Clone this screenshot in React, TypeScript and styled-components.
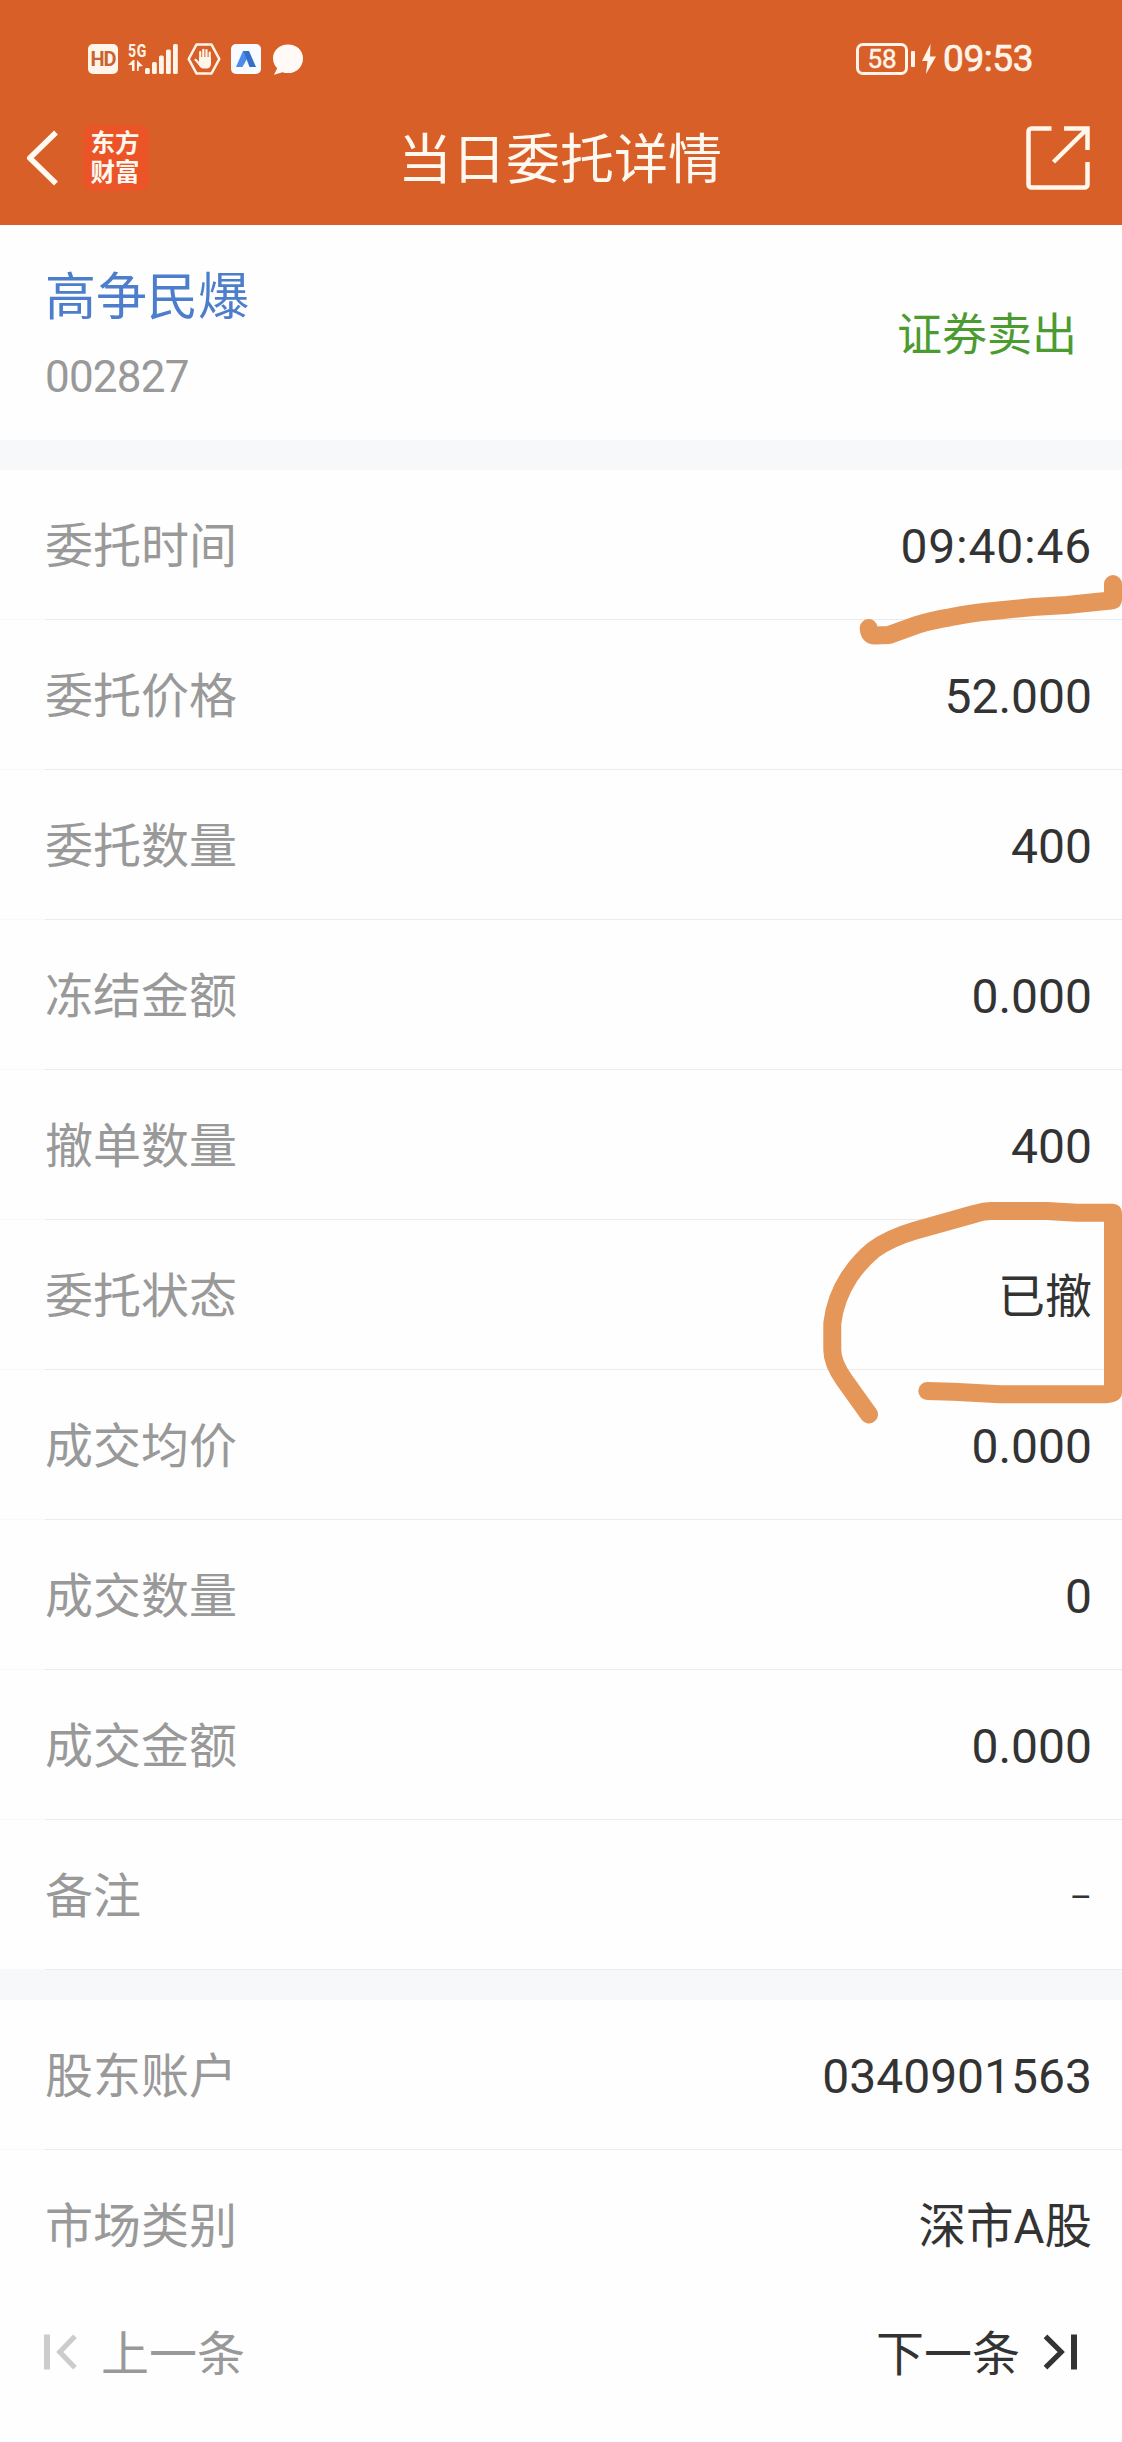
import React from "react";
import styled, { createGlobalStyle } from "styled-components";

const GlobalStyle = createGlobalStyle`
  * { box-sizing: border-box; }
  body {
    margin: 0;
    background: #fefefe;
    font-family: Roboto, "Noto Sans CJK SC", sans-serif;
  }
`;

const ORANGE = "#d85f27";
const CREAM = "#fff4ea";

const Screen = styled.main`
  position: relative;
  width: 1122px;
  height: 2442px;
  overflow: hidden;
  background: #fefefe;
`;

const Top = styled.header`
  height: 225px;
  background: ${ORANGE};
  color: #fff8f0;
`;

const StatusBar = styled.div`
  display: flex;
  justify-content: space-between;
  height: 117px;
  padding: 42px 90px 0 88px;
`;

const StatusGroup = styled.div`
  display: flex;
  align-items: center;
  height: 34px;
  color: ${CREAM};
`;

const HdBadge = styled.span`
  display: flex;
  align-items: center;
  justify-content: center;
  width: 30px;
  height: 30px;
  margin-right: 10px;
  border-radius: 5px;
  background: ${CREAM};
  color: #c8632f;
  font-size: 20px;
  font-weight: 700;
  letter-spacing: -1px;
`;

const Network = styled.div`
  display: flex;
  align-items: flex-end;
  margin-right: 9px;
`;

const NetworkType = styled.div`
  width: 17px;
  height: 32px;
  font-size: 19px;
  line-height: 16px;
  font-weight: 700;
  letter-spacing: 1px;
  white-space: nowrap;

  span {
    display: block;
    transform: scaleX(0.74);
    transform-origin: left;
  }
  svg { display: block; }
`;

const Bars = styled.svg`
  display: block;
`;

const AppBadge = styled.span`
  display: flex;
  align-items: center;
  justify-content: center;
  width: 30px;
  height: 30px;
  margin: 0 11px 0 10px;
  border-radius: 5px;
  background: #f8fbff;
`;

const Battery = styled.span`
  display: flex;
  align-items: center;
  justify-content: center;
  width: 52px;
  height: 32px;
  border: 3px solid ${CREAM};
  border-radius: 7px;
  font-size: 26px;
  line-height: 26px;
  -webkit-text-stroke: 0.5px ${CREAM};
`;

const BatteryNub = styled.span`
  width: 4px;
  height: 16px;
  margin: 0 7px 0 3px;
  border-radius: 1px;
  background: ${CREAM};
`;

const Clock = styled.time`
  width: 89px;
  margin-left: 7px;
  font-size: 37px;
  line-height: 34px;
  letter-spacing: -0.4px;
  -webkit-text-stroke: 0.7px ${CREAM};
  white-space: nowrap;
`;

const TitleBar = styled.div`
  display: grid;
  grid-template-columns: 1fr auto 1fr;
  align-items: center;
  height: 82px;
  padding: 0 32px 0 26px;
`;

const TitleLeft = styled.div`
  display: flex;
  align-items: center;
  gap: 24px;
`;

const BrandLogo = styled.div`
  display: flex;
  flex-direction: column;
  align-items: center;
  width: 66px;
  height: 66px;
  padding: 5px 2px 0 0;
  border-radius: 10px;
  background: #ea5427;
  font-size: 24.5px;
  line-height: 28.5px;
  font-weight: 700;
`;

const Title = styled.h1`
  margin: 0;
  padding: 6px 0 0 4px;
  font-size: 54px;
  line-height: 76px;
  font-weight: 400;
`;

const TitleRight = styled.div`
  display: flex;
  justify-content: flex-end;
`;

const Summary = styled.section`
  display: flex;
  align-items: center;
  justify-content: space-between;
  height: 215px;
  padding: 0 45px;
`;

const Stock = styled.div`
  padding-top: 9px;
`;

const StockName = styled.div`
  color: #4d7ecb;
  font-size: 51px;
  line-height: 80px;
`;

const StockCode = styled.div`
  color: #999;
  font-size: 44px;
  line-height: 79px;
  letter-spacing: -0.8px;
`;

const Side = styled.div`
  padding-bottom: 3px;
  color: #4b9b31;
  font-size: 45px;
`;

const Band = styled.div`
  height: 30px;
  background: #f7f8fa;
`;

const Row = styled.div<{ $last?: boolean }>`
  display: flex;
  align-items: center;
  justify-content: space-between;
  height: 150px;
  padding: 4px 30px 0 45px;
  background: ${(p) =>
    p.$last
      ? "none"
      : "linear-gradient(to right, #f8f8f8 45px, #ebebeb 45px) bottom / 100% 1px no-repeat"};
  font-size: 48px;
  line-height: 72px;
`;

const Label = styled.span`
  color: #999;
`;

const Value = styled.span<{ $tracking?: number; $size?: number }>`
  color: #333;
  font-size: ${(p) => p.$size ?? 48}px;
  letter-spacing: ${(p) => p.$tracking ?? 0}px;
`;

const Pager = styled.nav`
  display: flex;
  align-items: center;
  justify-content: space-between;
  height: 104px;
  padding: 0 45px 0 44px;
`;

const PagerButton = styled.button<{ $disabled?: boolean }>`
  display: flex;
  align-items: center;
  gap: 23px;
  padding: 0;
  border: 0;
  background: none;
  color: ${(p) => (p.$disabled ? "#999" : "#333")};
  font: inherit;
  font-size: 48px;
  line-height: 72px;
`;

const PagerText = styled.span`
  padding-top: 5px;
`;

const Markup = styled.svg`
  position: absolute;
  left: 0;
  top: 0;
  pointer-events: none;
`;

type Entry = { label: string; value: string; tracking?: number; size?: number };

const orderRows: Entry[] = [
  { label: "委托时间", value: "09:40:46", tracking: 0.8 },
  { label: "委托价格", value: "52.000" },
  { label: "委托数量", value: "400" },
  { label: "冻结金额", value: "0.000" },
  { label: "撤单数量", value: "400" },
  { label: "委托状态", value: "已撤", size: 47 },
  { label: "成交均价", value: "0.000" },
  { label: "成交数量", value: "0" },
  { label: "成交金额", value: "0.000" },
  { label: "备注", value: "–", size: 34 },
];

const accountRows: Entry[] = [
  { label: "股东账户", value: "0340901563" },
  { label: "市场类别", value: "深市A股", size: 47.5 },
];

const NetworkArrows = () => (
  <svg width="16" height="14" viewBox="0 0 16 14" fill={CREAM}>
    <path d="M0 6 5 1h1.500v11H4V6zM9 1l6 6-4 .5L10.500 12H9z" />
  </svg>
);

const SignalBars = () => (
  <Bars width="33" height="32" viewBox="0 0 33 32" fill={CREAM}>
    <rect x="0" y="25" width="4.800" height="6" rx="1.500" />
    <rect x="7" y="19" width="4.800" height="12" rx="1.500" />
    <rect x="14" y="12.500" width="4.800" height="18.500" rx="1.500" />
    <rect x="21" y="6.500" width="4.800" height="24.500" rx="1.500" />
    <rect x="28" y="1" width="4.800" height="30" rx="1.500" />
  </Bars>
);

const HandIcon = () => (
  <svg width="34" height="34" viewBox="0 0 34 34" fill="none" stroke={CREAM}>
    <path d="M9.500 2.500h15L32.300 17l-7.800 14.500h-15L1.700 17z" strokeWidth="2.600" strokeLinejoin="round" />
    <path d="M13.200 17V10M16.300 16V7.800M19.500 16V8M22.700 17v-6.500M8.500 17.800l4 4.200" strokeWidth="2.200" strokeLinecap="round" />
    <path d="M12 15h12v6.500c0 3-2 5-4.500 5h-3c-2 0-3.200-1-4.300-2.700L10 20l2 .5z" fill={CREAM} stroke="none" />
  </svg>
);

const BlueMark = () => (
  <svg width="20" height="17" viewBox="0 0 20 17">
    <path d="M7 0h6l-1.500 7L6.500 16H0z" fill="#4d8ce8" />
    <path d="M7.500 0H13l7 16h-6.500z" fill="#3470c8" />
  </svg>
);

const BubbleIcon = () => (
  <svg width="32" height="33" viewBox="0 0 32 33" fill="#fffaf6">
    <path d="M16 1.500C7.500 1.500 1 7.500 1 15.300c0 4.200 1.800 7.700 4.200 10L2 31.800l8.500-2.500c1.700.6 3.500.8 5.500.8 8.500 0 15-6.500 15-14.700S24.500 1.500 16 1.500z" />
  </svg>
);

const BoltIcon = () => (
  <svg width="14" height="30" viewBox="0 0 14 30" fill={CREAM}>
    <path d="M8.500 0 0 17h5.500L4 30 14 12.500H8z" />
  </svg>
);

const BackIcon = () => (
  <svg width="33" height="56" viewBox="0 0 33 56" fill="none" stroke="#fffaf2" strokeWidth="5.500">
    <path d="M30 2.500 3.800 28 30 53.500" strokeLinejoin="round" />
  </svg>
);

const ShareIcon = () => (
  <svg width="64" height="64" viewBox="0 0 64 64" fill="none" stroke="#fff7ec" strokeWidth="4.500">
    <path d="M25.500 2.500H5.500a3 3 0 0 0-3 3v53a3 3 0 0 0 3 3h53a3 3 0 0 0 3-3V36M38 2.500h23.500V24M60.500 3.500 27.500 36" />
  </svg>
);

const FirstIcon = () => (
  <svg width="34" height="36" viewBox="0 0 34 36" fill="none" stroke="#ccc" strokeWidth="6">
    <path d="M3 .5v35" />
    <path d="M31 2.300 15.800 18 31 33.700" strokeWidth="5.200" />
  </svg>
);

const LastIcon = () => (
  <svg width="34" height="36" viewBox="0 0 34 36" fill="none" stroke="#333" strokeWidth="6">
    <path d="M31 .5v35" />
    <path d="M2.500 2.300 18.200 18 2.500 33.700" strokeWidth="5.200" />
  </svg>
);

const Rows = ({ rows, open }: { rows: Entry[]; open?: boolean }) => (
  <section>
    {rows.map((row, i) => (
      <Row key={row.label} $last={open && i === rows.length - 1}>
        <Label>{row.label}</Label>
        <Value $tracking={row.tracking} $size={row.size}>
          {row.value}
        </Value>
      </Row>
    ))}
  </section>
);

export default function App() {
  return (
    <Screen>
      <GlobalStyle />
      <Top>
        <StatusBar>
          <StatusGroup>
            <HdBadge>HD</HdBadge>
            <Network>
              <NetworkType>
                <span>5G</span>
                <NetworkArrows />
              </NetworkType>
              <SignalBars />
            </Network>
            <HandIcon />
            <AppBadge>
              <BlueMark />
            </AppBadge>
            <BubbleIcon />
          </StatusGroup>
          <StatusGroup>
            <Battery>58</Battery>
            <BatteryNub />
            <BoltIcon />
            <Clock>09:53</Clock>
          </StatusGroup>
        </StatusBar>
        <TitleBar>
          <TitleLeft>
            <BackIcon />
            <BrandLogo>
              <span>东方</span>
              <span>财富</span>
            </BrandLogo>
          </TitleLeft>
          <Title>当日委托详情</Title>
          <TitleRight>
            <ShareIcon />
          </TitleRight>
        </TitleBar>
      </Top>
      <Summary>
        <Stock>
          <StockName>高争民爆</StockName>
          <StockCode>002827</StockCode>
        </Stock>
        <Side>证券卖出</Side>
      </Summary>
      <Band />
      <Rows rows={orderRows} />
      <Band />
      <Rows rows={accountRows} open />
      <Pager>
        <PagerButton $disabled>
          <FirstIcon />
          <PagerText>上一条</PagerText>
        </PagerButton>
        <PagerButton>
          <PagerText>下一条</PagerText>
          <LastIcon />
        </PagerButton>
      </Pager>
      <Markup
        width="1122"
        height="2442"
        viewBox="0 0 1122 2442"
        fill="none"
        stroke="#e59659"
        strokeWidth="18"
        strokeLinecap="round"
        strokeLinejoin="round"
      >
        <path d="M868.700 628Q869 635.500 874 635.500L889 635L916.700 625Q932 620 950 617.300Q970 613 993.300 611L1033 607L1066.700 605L1113 600.300V584" />
        <path d="M869 1414.500L844.300 1380Q832.300 1363 832.300 1350V1323.300Q835 1299 849.300 1276.700Q860 1261 873.300 1250Q890 1238 915 1230.700L976 1213.500Q984 1211 990.700 1211H1046.700L1076.700 1212.700H1113V1392.500Q1109 1394.300 1101.700 1394.300H1000L953.300 1391.700L927.300 1391" />
      </Markup>
    </Screen>
  );
}
